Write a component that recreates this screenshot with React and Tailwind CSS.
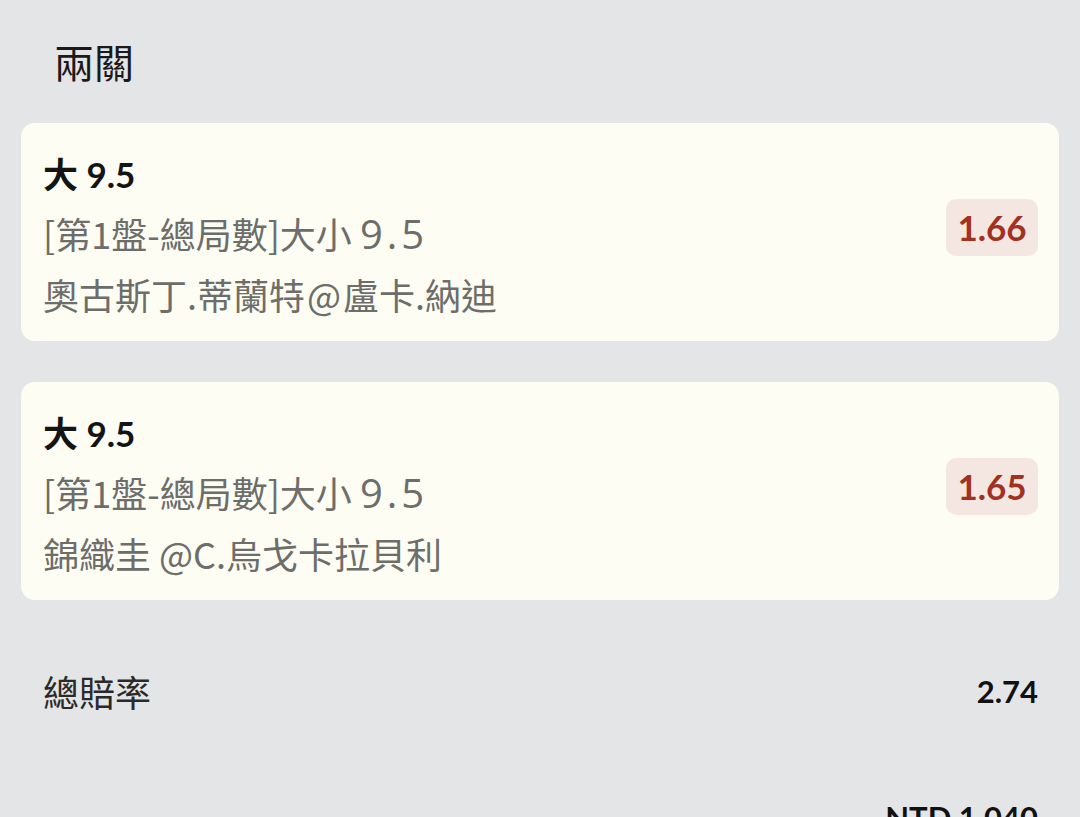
export default function App() {
  const font = { fontFamily: 'Lato, "Noto Sans CJK TC", sans-serif' };
  const cjk = { fontFamily: '"Noto Sans CJK TC", sans-serif' };
  const num = { fontFamily: '"Open Sans", "Noto Sans CJK TC", sans-serif' };
  const Market = () => (
    <>
      [第1盤-總局數]大小 <span className="text-[40px] leading-none tracking-[4px]" style={num}>9.5</span>
    </>
  );
  const legs = [
    {
      title: "大 9.5",
      match: (
        <>
          奧古斯丁.蒂蘭特<span className="mx-[2px]">@</span>盧卡.納迪
        </>
      ),
      odds: "1.66",
    },
    {
      title: "大 9.5",
      match: (
        <>
          錦織圭 @C.烏戈卡拉貝利
        </>
      ),
      odds: "1.65",
    },
  ];
  return (
    <div className="h-[817px] overflow-hidden bg-[#e4e5e7] px-[21px]" style={font}>
      <div className="pl-[33px] pt-[33px] h-[123px] text-[40px] leading-[56px] text-[#1a1a1a]" style={cjk}>
        兩關
      </div>
      <div className="flex flex-col gap-[41px]">
        {legs.map((l, i) => (
          <div key={i} className="flex items-center justify-between rounded-[14px] bg-[#fdfdf4] pl-[22px] pr-[21px] pt-[22px] pb-[16px] h-[218px]">
            <div className="flex flex-col">
              <div className="text-[35px] leading-[58px] font-bold text-[#141414]">{l.title}</div>
              <div className="text-[36px] leading-[60px] text-[#6d6d6a] whitespace-nowrap" style={cjk}>
                <Market />
              </div>
              <div className="text-[36px] leading-[62px] text-[#6d6d6a] whitespace-nowrap" style={cjk}>{l.match}</div>
            </div>
            <div className="mb-[15px] flex h-[57px] w-[92px] items-center justify-center rounded-[10px] bg-[#f4e7e1] text-[35px] font-bold text-[#a3311f]">
              {l.odds}
            </div>
          </div>
        ))}
      </div>
      <div className="flex items-center justify-between pl-[22px] pr-[21px] h-[182px]">
        <span className="text-[36px] text-[#2a2a2a]" style={cjk}>總賠率</span>
        <span className="text-[31px] font-bold text-[#111]">2.74</span>
      </div>
      <div className="flex justify-end pr-[21px] pt-[12px]">
        <span className="text-[31px] font-bold text-[#111]">NTD 1,040</span>
      </div>
    </div>
  );
}
